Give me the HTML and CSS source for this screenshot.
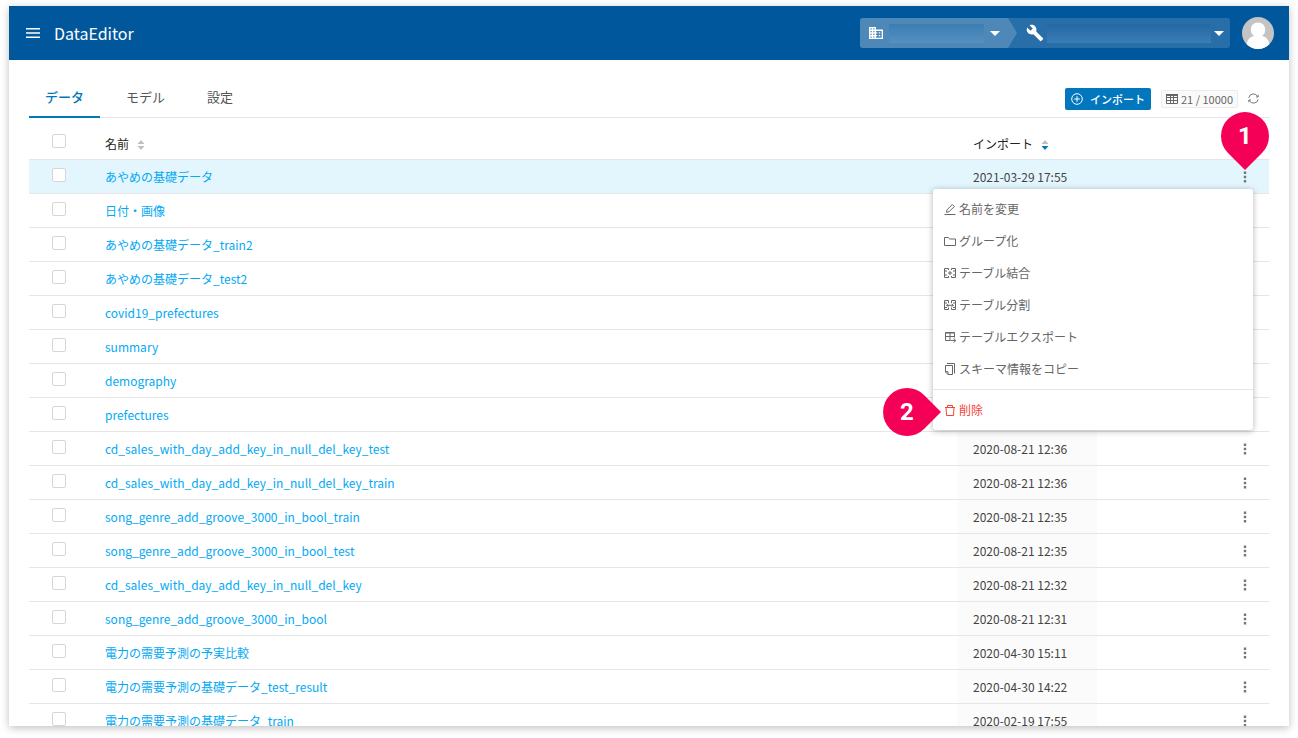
FILE: index.html
```html
<!DOCTYPE html>
<html lang="ja">
<head>
<meta charset="utf-8">
<meta name="viewport" content="width=device-width, initial-scale=1">
<title>DataEditor</title>
<link rel="stylesheet" href="styles.css">
</head>
<body>
<svg class="sprite" aria-hidden="true">
  <symbol id="dots" viewBox="0 0 16 16"><path d="M6.800 2.600h2.400v2.400h-2.400zM6.800 6.800h2.400v2.400h-2.400zM6.800 11h2.400v2.400h-2.400z" fill="#777"/></symbol>
</svg>
<div class="app">
  <header class="topbar">
    <button class="icon-button" type="button" aria-label="メニュー">
      <svg width="14" height="10" viewBox="0 0 14 10"><path d="M0 .75h14M0 5h14M0 9.250h14" stroke="#fff" stroke-width="1.500"/></svg>
    </button>
    <h1 class="brand">DataEditor</h1>
    <div class="context">
      <label class="context-part context-org">
        <svg width="14" height="12" viewBox="0 0 14 12"><path fill="#fff" fill-rule="evenodd" d="M0 0h7v2.600h7V12H0zM1.400 1.300v1.300h1.300V1.300zM4.200 1.300v1.300h1.300V1.300zM1.400 4v1.300h1.300V4zM4.200 4v1.300h1.300V4zM1.400 6.700V8h1.300V6.700zM4.200 6.700V8h1.300V6.700zM1.400 9.400v1.300h1.300V9.400zM4.200 9.400v1.300h1.300V9.400zM7 4v1.300h1.300v1.300H7V8h1.300v1.300H7v1.400h5.700V4zM9.800 5.300h1.400v1.300H9.800zM9.800 8h1.400v1.300H9.800z"/></svg>
        <select class="context-select" aria-label="組織"></select>
        <svg class="caret" width="10" height="5" viewBox="0 0 10 5"><path d="M0 0h10L5 5z" fill="#fff"/></svg>
      </label>
      <label class="context-part context-project">
        <svg width="18" height="18" viewBox="0 0 24 24"><path fill="#fff" d="M22.700 19l-9.100-9.100c.9-2.300.4-5-1.500-6.900-2-2-5-2.400-7.400-1.300L9 6 6 9 1.600 4.700C.4 7.100.9 10.100 2.900 12.100c1.900 1.900 4.600 2.400 6.900 1.500l9.100 9.100c.4.4 1 .4 1.400 0l2.300-2.300c.5-.4.5-1.100.1-1.400z"/></svg>
        <select class="context-select" aria-label="プロジェクト"></select>
        <svg class="caret" width="10" height="5" viewBox="0 0 10 5"><path d="M0 0h10L5 5z" fill="#fff"/></svg>
      </label>
    </div>
    <button class="avatar" type="button" aria-label="アカウント">
      <svg width="32" height="32" viewBox="0 0 32 32"><circle cx="16" cy="16" r="16" fill="#c4c4c4"/><path d="M16 5.500c4.300 0 7.200 3 7.200 7.300 0 2.800-1.200 5-3.200 6.200 4 .8 6.800 4 7.400 8.200A16 16 0 0 1 4.600 27.200C5.200 23 8 19.800 12 19c-2-1.200-3.200-3.400-3.200-6.200 0-4.300 2.900-7.300 7.200-7.300z" fill="#fff"/></svg>
    </button>
  </header>

  <main class="content">
    <div class="toolbar">
      <nav class="tabs">
        <a class="tab tab-active" href="#data">データ</a>
        <a class="tab" href="#model">モデル</a>
        <a class="tab" href="#settings">設定</a>
      </nav>
      <div class="tools">
        <button class="import" type="button">
          <svg width="12" height="12" viewBox="0 0 12 12" fill="none" stroke="#fff"><circle cx="6" cy="6" r="5.300"/><path d="M6 3.200v5.600M3.200 6h5.600"/></svg>
          インポート
        </button>
        <span class="quota">
          <svg width="12" height="10" viewBox="0 0 12 10" fill="none" stroke="#666"><path d="M.5 3.500h11M.5 6.500h11M.5 9.500h11M.5 1v8.500M4.500 1v8.500M7.500 1v8.500M11.500 1v8.500"/><path d="M0 1h12" stroke-width="2"/></svg>
          21 / 10000
        </span>
        <button class="icon-button" type="button" aria-label="更新">
          <svg width="11" height="11" viewBox="0 0 11 11" fill="none" stroke="#777"><path d="M.8 4.800A4.700 4.700 0 0 1 9.700 3.600M10.200 6.200A4.700 4.700 0 0 1 1.300 7.400"/><path d="M10.200 1.800V4H8M.8 9.200V7H3"/></svg>
        </button>
      </div>
    </div>

    <table class="data">
      <colgroup><col class="col-check"><col><col class="col-date"><col class="col-actions"></colgroup>
      <thead>
        <tr>
          <th class="check"><input type="checkbox" aria-label="すべて選択"></th>
          <th>名前<svg class="sort" width="8" height="10" viewBox="0 0 8 10"><path d="M4 0l3.500 4h-7z" fill="#bfbfbf"/><path d="M4 10L.5 6h7z" fill="#bfbfbf"/></svg></th>
          <th class="date">インポート<svg class="sort" width="8" height="10" viewBox="0 0 8 10"><path d="M4 0l3.500 4h-7z" fill="#bfbfbf"/><path d="M4 10L.5 6h7z" fill="#0277bd"/></svg></th>
          <th></th>
        </tr>
      </thead>
      <tbody>
        <tr class="selected">
          <td class="check"><input type="checkbox" aria-label="選択"></td>
          <td><a href="#1">あやめの基礎データ</a></td>
          <td class="date">2021-03-29 17:55</td>
          <td class="actions">
            <div class="action-anchor">
              <button class="more" type="button" aria-label="操作"><svg width="16" height="16"><use href="#dots"/></svg></button>
              <div class="pin pin-down">
                <svg width="48" height="58" viewBox="0 0 48 58"><path d="M24 58L7 41A24 24 0 1 1 41 41z" fill="#f50057"/></svg>
                <span class="pin-number">1</span>
              </div>
              <div class="menu">
                <button class="menu-item" type="button">
                  <svg width="12" height="12" viewBox="0 0 12 12" fill="none" stroke="#666"><path d="M.5 11.500h11M2.500 9.300l.5-2.500L8.300 1.500l2 2L5 8.800z"/></svg>名前を変更</button>
                <button class="menu-item" type="button">
                  <svg width="12" height="12" viewBox="0 0 12 12" fill="none" stroke="#666"><path d="M.5 10.500v-8h3.700l1.600 1.500h5.700v6.500z"/></svg>グループ化</button>
                <button class="menu-item" type="button">
                  <svg width="12" height="12" viewBox="0 0 12 12" fill="none" stroke="#666"><path d="M4.500 3V1.500h-4v9h4V9M7.500 3V1.500h4v9h-4V9M.5 4h2.500M9 4h2.500M.5 8h2.500M9 8h2.500M4 6h4M6 4v4"/></svg>テーブル結合</button>
                <button class="menu-item" type="button">
                  <svg width="12" height="12" viewBox="0 0 12 12" fill="none" stroke="#666"><path d="M4.500 4V1.500h-4v9h4V8.500M7.500 4V1.500h4v9h-4V8.500M.5 4h2.500M9 4h2.500M.5 8.500h2.500M9 8.500h2.500M2.500 6.300h7M4.300 4.800L2.800 6.300l1.500 1.500M7.700 4.800l1.500 1.500-1.500 1.500"/></svg>テーブル分割</button>
                <button class="menu-item" type="button">
                  <svg width="12" height="12" viewBox="0 0 12 12" fill="none" stroke="#666"><path d="M6.500 9.500h-5v-8h9v5M1 2h10M1.500 5.500h9M6 2v7.500M7 9.500h4.500M9.700 7.300l2 2.200-2 2.200"/></svg>テーブルエクスポート</button>
                <button class="menu-item" type="button">
                  <svg width="12" height="12" viewBox="0 0 12 12" fill="none" stroke="#666"><path d="M3 .5h7.500v10"/><path d="M1.500 2.500h7v9H4L1.500 9zM1.500 8.700H4v2.800"/></svg>スキーマ情報をコピー</button>
                <hr class="menu-divider">
                <button class="menu-item menu-danger" type="button">
                  <svg width="12" height="12" viewBox="0 0 12 12" fill="none" stroke="#f44336"><path d="M1 3.500h10M3.500 3.500v-2h5v2M2 3.500l.5 8h7l.5-8"/></svg>削除
                  <span class="pin pin-right">
                    <svg width="58" height="48" viewBox="0 0 58 48"><path d="M58 24L41 41A24 24 0 1 1 41 7z" fill="#f50057"/></svg>
                    <span class="pin-number">2</span>
                  </span>
                </button>
              </div>
            </div>
          </td>
        </tr>
        <tr><td class="check"><input type="checkbox" aria-label="選択"></td><td><a href="#2">日付・画像</a></td><td class="date"></td><td></td></tr>
        <tr><td class="check"><input type="checkbox" aria-label="選択"></td><td><a href="#3">あやめの基礎データ_train2</a></td><td class="date"></td><td></td></tr>
        <tr><td class="check"><input type="checkbox" aria-label="選択"></td><td><a href="#4">あやめの基礎データ_test2</a></td><td class="date"></td><td></td></tr>
        <tr><td class="check"><input type="checkbox" aria-label="選択"></td><td><a href="#5">covid19_prefectures</a></td><td class="date"></td><td></td></tr>
        <tr><td class="check"><input type="checkbox" aria-label="選択"></td><td><a href="#6">summary</a></td><td class="date"></td><td></td></tr>
        <tr><td class="check"><input type="checkbox" aria-label="選択"></td><td><a href="#7">demography</a></td><td class="date"></td><td></td></tr>
        <tr><td class="check"><input type="checkbox" aria-label="選択"></td><td><a href="#8">prefectures</a></td><td class="date"></td><td></td></tr>
        <tr><td class="check"><input type="checkbox" aria-label="選択"></td><td><a href="#9">cd_sales_with_day_add_key_in_null_del_key_test</a></td><td class="date">2020-08-21 12:36</td><td class="actions"><button class="more" type="button" aria-label="操作"><svg width="16" height="16"><use href="#dots"/></svg></button></td></tr>
        <tr><td class="check"><input type="checkbox" aria-label="選択"></td><td><a href="#10">cd_sales_with_day_add_key_in_null_del_key_train</a></td><td class="date">2020-08-21 12:36</td><td class="actions"><button class="more" type="button" aria-label="操作"><svg width="16" height="16"><use href="#dots"/></svg></button></td></tr>
        <tr><td class="check"><input type="checkbox" aria-label="選択"></td><td><a href="#11">song_genre_add_groove_3000_in_bool_train</a></td><td class="date">2020-08-21 12:35</td><td class="actions"><button class="more" type="button" aria-label="操作"><svg width="16" height="16"><use href="#dots"/></svg></button></td></tr>
        <tr><td class="check"><input type="checkbox" aria-label="選択"></td><td><a href="#12">song_genre_add_groove_3000_in_bool_test</a></td><td class="date">2020-08-21 12:35</td><td class="actions"><button class="more" type="button" aria-label="操作"><svg width="16" height="16"><use href="#dots"/></svg></button></td></tr>
        <tr><td class="check"><input type="checkbox" aria-label="選択"></td><td><a href="#13">cd_sales_with_day_add_key_in_null_del_key</a></td><td class="date">2020-08-21 12:32</td><td class="actions"><button class="more" type="button" aria-label="操作"><svg width="16" height="16"><use href="#dots"/></svg></button></td></tr>
        <tr><td class="check"><input type="checkbox" aria-label="選択"></td><td><a href="#14">song_genre_add_groove_3000_in_bool</a></td><td class="date">2020-08-21 12:31</td><td class="actions"><button class="more" type="button" aria-label="操作"><svg width="16" height="16"><use href="#dots"/></svg></button></td></tr>
        <tr><td class="check"><input type="checkbox" aria-label="選択"></td><td><a href="#15">電力の需要予測の予実比較</a></td><td class="date">2020-04-30 15:11</td><td class="actions"><button class="more" type="button" aria-label="操作"><svg width="16" height="16"><use href="#dots"/></svg></button></td></tr>
        <tr><td class="check"><input type="checkbox" aria-label="選択"></td><td><a href="#16">電力の需要予測の基礎データ_test_result</a></td><td class="date">2020-04-30 14:22</td><td class="actions"><button class="more" type="button" aria-label="操作"><svg width="16" height="16"><use href="#dots"/></svg></button></td></tr>
        <tr><td class="check"><input type="checkbox" aria-label="選択"></td><td><a href="#17">電力の需要予測の基礎データ_train</a></td><td class="date">2020-02-19 17:55</td><td class="actions"><button class="more" type="button" aria-label="操作"><svg width="16" height="16"><use href="#dots"/></svg></button></td></tr>
      </tbody>
    </table>
  </main>
</div>
</body>
</html>
```
FILE: styles.css
```css
* {
  box-sizing: border-box;
}

body {
  margin: 0;
  padding: 6px 9px 12px;
  height: 100vh;
  overflow: hidden;
  background: #fff;
  color: #444;
  font-family: "Noto Sans CJK JP", "Noto Sans", sans-serif;
  font-size: 12px;
  line-height: 18px;
}

button {
  margin: 0;
  padding: 0;
  border: 0;
  background: none;
  color: inherit;
  font: inherit;
  cursor: pointer;
}

svg {
  display: block;
  flex: none;
}

.sprite {
  position: absolute;
  width: 0;
  height: 0;
}

.app {
  height: 100%;
  overflow: hidden;
  background: #fff;
  box-shadow: 0 2px 8px rgba(0, 0, 0, 0.25);
}

/* Top bar */

.topbar {
  display: flex;
  align-items: center;
  height: 54px;
  padding: 0 15px 0 17px;
  background: #01579b;
  color: #fff;
}

.icon-button {
  display: flex;
}

.brand {
  margin: 0 auto 0 14px;
  font-size: 16px;
  font-weight: 400;
  line-height: 24px;
}

.context {
  display: flex;
  height: 30px;
  margin-right: 12px;
  border-radius: 3px;
  background: #286ea9;
  overflow: hidden;
}

.context-part {
  display: flex;
  align-items: center;
}

.context-org {
  width: 157px;
  padding: 0 17px 0 9px;
  gap: 6px;
  background: #4d88b9;
  clip-path: polygon(0 0, 148px 0, 100% 50%, 148px 100%, 0 100%);
}

.context-project {
  width: 213px;
  padding: 0 6px 0 9px;
  gap: 3px;
}

.context-select {
  flex: 1;
  min-width: 0;
  height: 19px;
  padding: 0;
  border: 0;
  border-radius: 0;
  appearance: none;
  background: linear-gradient(#3b7db3, #5690c0);
}

.context-project .context-select {
  background: linear-gradient(#2469a5, #3b7db4);
}

.avatar {
  border-radius: 50%;
}

/* Tabs and tools */

.content {
  padding: 0 20px;
}

.toolbar {
  display: flex;
  justify-content: space-between;
  height: 58px;
  border-bottom: 1px solid #e4e4e4;
}

.tabs {
  display: flex;
  gap: 10px;
  height: 58px;
}

.tab {
  padding: 27px 16px 0;
  border-bottom: 2px solid transparent;
  color: #555;
  font-size: 13px;
  line-height: 20px;
  text-decoration: none;
}

.tab-active {
  border-color: #0277bd;
  color: #0277bd;
  font-weight: 500;
}

.tools {
  display: flex;
  align-items: center;
  gap: 10px;
  padding: 20px 10px 0 0;
}

.import {
  display: flex;
  align-items: center;
  gap: 7px;
  height: 22px;
  padding: 0 6px;
  border-radius: 2px;
  background: #0277bd;
  color: #fff;
  font-size: 11px;
  font-weight: 500;
}

.quota {
  display: flex;
  align-items: center;
  gap: 3px;
  height: 18px;
  padding: 0 4px;
  border: 1px solid #ececec;
  border-radius: 2px;
  background: #fafafa;
  color: #666;
  font-size: 11px;
}

/* Data table */

.data {
  width: 100%;
  table-layout: fixed;
  border-collapse: separate;
  border-spacing: 0;
}

.col-check {
  width: 76px;
}

.col-date {
  width: 140px;
}

.col-actions {
  width: 172px;
}

th,
td {
  height: 34px;
  padding: 0;
  border-bottom: 1px solid #e6e6e6;
  text-align: left;
  vertical-align: middle;
}

th {
  height: 42px;
  padding-top: 10px;
  color: #222;
  font-weight: 400;
}

th.check {
  padding-top: 8px;
}

.check {
  padding-left: 23px;
}

.check input {
  display: block;
  width: 14px;
  height: 14px;
  margin: 0 0 4px;
  border: 1px solid #d6d6d6;
  border-radius: 2px;
  appearance: none;
  background: #fff;
}

.sort {
  display: inline-block;
  margin-left: 8px;
  vertical-align: -1px;
}

.date {
  padding-left: 16px;
}

td.date {
  background: #fbfbfb;
}

td a {
  color: #03a9f4;
  text-decoration: none;
}

.selected td {
  background: #e3f6fd;
}

.actions {
  padding-right: 16px;
}

.more {
  display: block;
  width: 16px;
  height: 16px;
  margin-left: auto;
}

.action-anchor {
  position: relative;
  width: 16px;
  margin-left: auto;
}

/* Context menu */

.menu {
  position: absolute;
  z-index: 1;
  top: 20px;
  right: 0;
  width: 320px;
  padding: 4px 0;
  border-radius: 3px;
  background: #fff;
  box-shadow: 0 1px 6px rgba(0, 0, 0, 0.3);
}

.menu-item {
  position: relative;
  display: flex;
  align-items: center;
  gap: 3px;
  width: 100%;
  height: 32px;
  padding: 1px 11px 0;
  color: #666;
}

.menu-danger {
  color: #f44336;
}

.menu-divider {
  margin: 4px 0;
  border: 0;
  border-top: 1px solid #e4e4e4;
}

/* Numbered callouts */

.pin {
  position: absolute;
  z-index: 2;
}

.pin-down {
  bottom: 15px;
  left: -16px;
}

.pin-right {
  top: -6px;
  right: 312px;
}

.pin-number {
  position: absolute;
  top: 0;
  left: 0;
  width: 48px;
  color: #fff;
  font-family: Roboto, sans-serif;
  font-size: 24px;
  font-weight: 700;
  line-height: 48px;
  text-align: center;
}
```
